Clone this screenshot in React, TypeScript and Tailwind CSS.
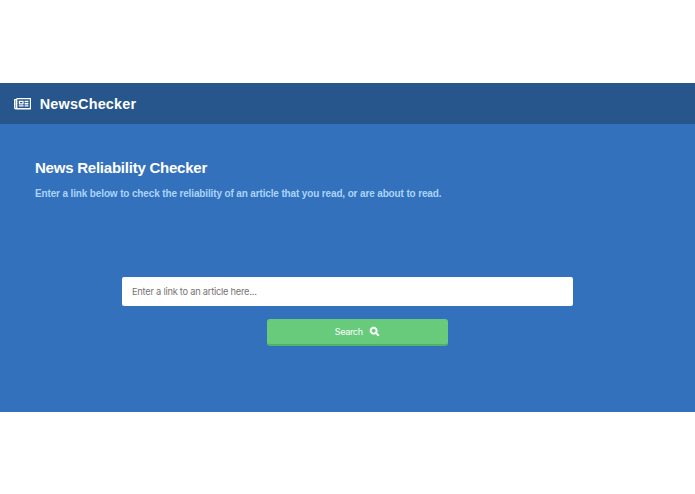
import { useState, type FormEvent } from 'react';
import { FaRegNewspaper, FaSearch } from 'react-icons/fa';

function Header() {
  return (
    <header className="flex h-[41px] items-center bg-[#27568d] pl-[14px] text-white">
      <FaRegNewspaper className="h-[15.4px] w-[17.3px]" />
      <span className="mt-[2px] ml-[8.4px] text-[14.4px] font-bold tracking-[0.2px]">NewsChecker</span>
    </header>
  );
}

function SearchForm() {
  const [link, setLink] = useState('');

  const handleSubmit = (e: FormEvent) => {
    e.preventDefault();
  };

  return (
    <form onSubmit={handleSubmit} className="mt-[76px] flex flex-col items-center">
      <input
        type="text"
        value={link}
        onChange={(e) => setLink(e.target.value)}
        placeholder="Enter a link to an article here..."
        className="h-[29px] w-[451px] rounded-[2px] bg-white px-[10px] font-['Inter',sans-serif] text-[9.3px] tracking-[-0.25px] text-gray-800 outline-none placeholder:text-[#757575]"
      />
      <button
        type="submit"
        className="mt-[13px] ml-[19px] flex h-[27px] w-[181px] items-center justify-center rounded-[3px] border-b-2 border-[#4fb36c] bg-[#68cb7c] font-['Inter',sans-serif] text-[9px] tracking-[-0.35px] text-white"
      >
        Search
        <FaSearch className="ml-[7.5px] h-[9px] w-[9px] overflow-visible" stroke="currentColor" strokeWidth={36} />
      </button>
    </form>
  );
}

export default function App() {
  return (
    <div className="h-[494px] overflow-hidden bg-white pt-[83px] font-['Liberation_Sans',sans-serif]">
      <Header />
      <main className="h-[288px] bg-[#3371bc] pt-[34px]">
        <div className="pl-[35px]">
          <h1 className="text-[15px] leading-[20px] font-bold tracking-[-0.23px] text-white">News Reliability Checker</h1>
          <p className="mt-[9px] text-[10px] leading-[14px] font-bold tracking-[-0.14px] text-[#a9d4f8]">
            Enter a link below to check the reliability of an article that you read, or are about to read.
          </p>
        </div>
        <SearchForm />
      </main>
    </div>
  );
}
